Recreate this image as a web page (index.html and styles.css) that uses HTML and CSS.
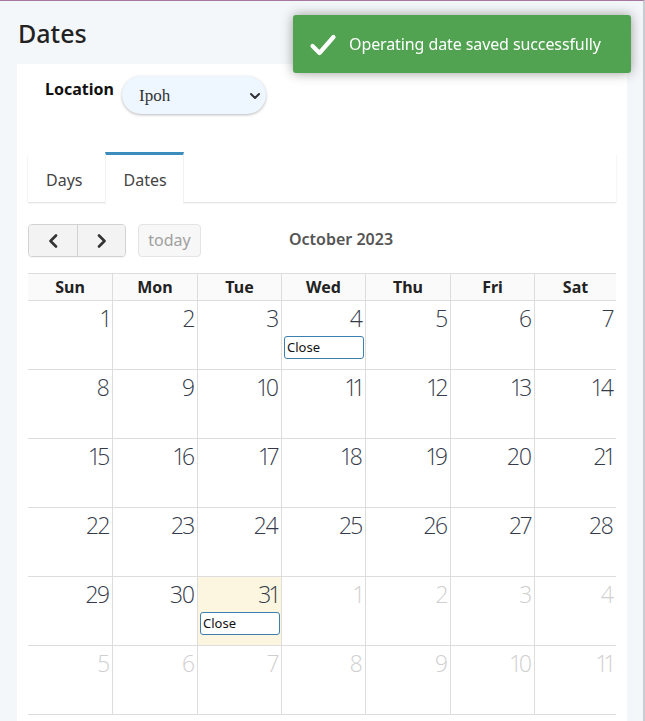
FILE: index.html
```html
<!DOCTYPE html>
<html lang="en">
<head>
<meta charset="utf-8">
<title>Dates</title>
<link rel="stylesheet" href="styles.css">
</head>
<body>
<div class="page">
  <h1 class="title">Dates</h1>
  <div class="card">
    <div class="loc-row">
      <label class="loc-label">Location</label>
      <div class="select">
        <span class="select-text">Ipoh</span>
        <svg class="chev" width="12" height="8" viewBox="0 0 12 8"><polyline points="2,2 6,6 10,2" fill="none" stroke="#333" stroke-width="2" stroke-linecap="round" stroke-linejoin="round"/></svg>
      </div>
    </div>

    <div class="tabs">
      <div class="tab">Days</div>
      <div class="tab active">Dates</div>
    </div>

    <div class="toolbar">
      <div class="btn-group">
        <button class="btn nav"><svg width="12" height="14" viewBox="0 0 12 14"><polyline points="9,1.5 3.5,7 9,12.5" fill="none" stroke="#333" stroke-width="2.6" stroke-linecap="round" stroke-linejoin="round"/></svg></button>
        <button class="btn nav"><svg width="12" height="14" viewBox="0 0 12 14"><polyline points="3,1.5 8.5,7 3,12.5" fill="none" stroke="#333" stroke-width="2.6" stroke-linecap="round" stroke-linejoin="round"/></svg></button>
      </div>
      <button class="btn today">today</button>
      <div class="month-title">October 2023</div>
    </div>

    <div class="cal">
      <div class="hd">Sun</div><div class="hd">Mon</div><div class="hd">Tue</div><div class="hd">Wed</div><div class="hd">Thu</div><div class="hd">Fri</div><div class="hd">Sat</div>

      <div class="day"><div class="num">1</div></div>
      <div class="day"><div class="num">2</div></div>
      <div class="day"><div class="num">3</div></div>
      <div class="day"><div class="num">4</div><div class="ev">Close</div></div>
      <div class="day"><div class="num">5</div></div>
      <div class="day"><div class="num">6</div></div>
      <div class="day"><div class="num">7</div></div>

      <div class="day"><div class="num">8</div></div>
      <div class="day"><div class="num">9</div></div>
      <div class="day"><div class="num">10</div></div>
      <div class="day"><div class="num">11</div></div>
      <div class="day"><div class="num">12</div></div>
      <div class="day"><div class="num">13</div></div>
      <div class="day"><div class="num">14</div></div>

      <div class="day"><div class="num">15</div></div>
      <div class="day"><div class="num">16</div></div>
      <div class="day"><div class="num">17</div></div>
      <div class="day"><div class="num">18</div></div>
      <div class="day"><div class="num">19</div></div>
      <div class="day"><div class="num">20</div></div>
      <div class="day"><div class="num">21</div></div>

      <div class="day"><div class="num">22</div></div>
      <div class="day"><div class="num">23</div></div>
      <div class="day"><div class="num">24</div></div>
      <div class="day"><div class="num">25</div></div>
      <div class="day"><div class="num">26</div></div>
      <div class="day"><div class="num">27</div></div>
      <div class="day"><div class="num">28</div></div>

      <div class="day"><div class="num">29</div></div>
      <div class="day"><div class="num">30</div></div>
      <div class="day today-cell"><div class="num">31</div><div class="ev">Close</div></div>
      <div class="day other"><div class="num">1</div></div>
      <div class="day other"><div class="num">2</div></div>
      <div class="day other"><div class="num">3</div></div>
      <div class="day other"><div class="num">4</div></div>

      <div class="day other"><div class="num">5</div></div>
      <div class="day other"><div class="num">6</div></div>
      <div class="day other"><div class="num">7</div></div>
      <div class="day other"><div class="num">8</div></div>
      <div class="day other"><div class="num">9</div></div>
      <div class="day other"><div class="num">10</div></div>
      <div class="day other"><div class="num">11</div></div>
    </div>
  </div>
</div>

<div class="toast">
  <svg class="toast-icon" width="28" height="24" viewBox="0 0 28 24"><polyline points="3.5,13 10.5,20 24.5,4" fill="none" stroke="#fff" stroke-width="4.2" stroke-linecap="round" stroke-linejoin="round"/></svg>
  <span class="toast-text">Operating date saved successfully</span>
</div>
</body>
</html>
```

FILE: styles.css
```css
* { box-sizing: border-box; }

html, body {
  margin: 0;
  padding: 0;
  height: 100%;
}

body {
  background: #f4f7fa;
  font-family: "Noto Sans", "Open Sans", sans-serif;
  color: #222;
  border-top: 1px solid #a7789f;
  border-right: 2px solid #c9cdd2;
  overflow: hidden;
}

.page {
  padding: 0 16px 0 17px;
}

.title {
  margin: 0;
  padding: 15px 0 0 1px;
  height: 63px;
  font-size: 25px;
  line-height: 34px;
  font-weight: 500;
  color: #222;
}

.card {
  background: #fff;
  width: 610px;
  padding: 12px 11px 0 11px;
  height: 657px;
  overflow: hidden;
}

.loc-row {
  display: flex;
  align-items: flex-start;
  padding-left: 17px;
  height: 38px;
}

.loc-label {
  font-weight: 700;
  font-size: 16px;
  line-height: 22px;
  padding-top: 2px;
  color: #111;
  width: 77px;
}

.select {
  width: 144px;
  height: 38px;
  border-radius: 19px;
  background: #eef6ff;
  box-shadow: 0 1px 3px rgba(0, 0, 0, 0.28);
  display: flex;
  align-items: center;
  justify-content: space-between;
  padding: 0 5px 0 17px;
}

.select-text {
  font-family: "Liberation Serif", serif;
  font-size: 17px;
  color: #333;
  padding-top: 1px;
}

.chev { display: block; margin-top: 1px; }

.tabs {
  margin-top: 38px;
  display: flex;
  height: 50px;
  background: #fff;
  box-shadow: 0 1px 2px rgba(0, 0, 0, 0.14);
  border-radius: 3px 3px 0 0;
}

.tab {
  border-top: 3px solid transparent;
  padding: 13px 18px 0 18px;
  margin-right: 5px;
  font-size: 16px;
  line-height: 24px;
  color: #444;
  height: 50px;
}

.tab.active {
  border-top-color: #3c8dbc;
  border-left: 1px solid #f1f1f1;
  border-right: 1px solid #f1f1f1;
  padding-left: 17px;
  padding-right: 16px;
  height: 52px;
  background: #fff;
  position: relative;
  z-index: 1;
}

.toolbar {
  margin-top: 22px;
  display: flex;
  align-items: center;
  height: 33px;
}

.btn-group {
  display: flex;
  height: 33px;
  border: 1px solid #d2d2d2;
  border-radius: 4px;
  overflow: hidden;
  box-shadow: 0 1px 1px rgba(0,0,0,0.05);
}

.btn {
  font-family: "Noto Sans", "Open Sans", sans-serif;
  margin: 0;
  padding: 0;
  border: none;
  background: #f3f3f3;
  display: flex;
  align-items: center;
  justify-content: center;
}

.btn.nav {
  width: 48px;
  height: 31px;
}

.btn.nav + .btn.nav {
  border-left: 1px solid #d2d2d2;
}

.btn.today {
  margin-left: 12px;
  width: 63px;
  height: 33px;
  border: 1px solid #e4e4e4;
  border-radius: 4px;
  background: #f7f7f7;
  color: #a0a0a0;
  font-size: 16px;
  padding-bottom: 1px;
}

.month-title {
  margin-left: 88px;
  font-size: 16px;
  font-weight: 600;
  color: #555;
  padding-bottom: 3px;
}

.cal {
  margin-top: 16px;
  display: grid;
  grid-template-columns: 85px 85px 84px 84px 85px 84px 81px;
  border-top: 1px solid #ddd;
}

.hd, .day {
  border-bottom: 1px solid #ddd;
  border-right: 1px solid #ddd;
}

.cal > div:nth-child(7n) {
  border-right: none;
}

.hd {
  height: 27px;
  background: #fafafa;
  text-align: center;
  font-weight: 700;
  font-size: 16px;
  line-height: 26px;
  color: #222;
}

.day {
  height: 69px;
  padding: 0 1px 0 2px;
}

.num {
  text-align: right;
  font-family: "Open Sans", "Noto Sans", sans-serif;
  font-weight: 300;
  font-size: 23px;
  letter-spacing: -1px;
  font-variant-numeric: proportional-nums;
  line-height: 28px;
  padding-top: 3px;
  padding-right: 2px;
  color: #343a4a;
}

.other .num {
  color: #cfcfcf;
}

.today-cell {
  background: #fcf6e0;
}

.ev {
  margin-top: 4px;
  height: 23px;
  border: 1px solid #3d7fae;
  border-radius: 3px;
  background: #fff;
  font-size: 13px;
  line-height: 20px;
  padding-left: 2px;
  color: #111;
}

.toast {
  position: fixed;
  top: 15px;
  left: 293px;
  width: 338px;
  height: 58px;
  background: #51a351;
  border-radius: 3px;
  box-shadow: 0 0 12px #999;
  display: flex;
  align-items: center;
  padding-left: 16px;
  color: #fff;
}

.toast-icon {
  display: block;
  margin-right: 12px;
  margin-top: 1px;
}

.toast-text {
  font-size: 16px;
  line-height: 20px;
  letter-spacing: -0.1px;
  color: #fff;
}
```
